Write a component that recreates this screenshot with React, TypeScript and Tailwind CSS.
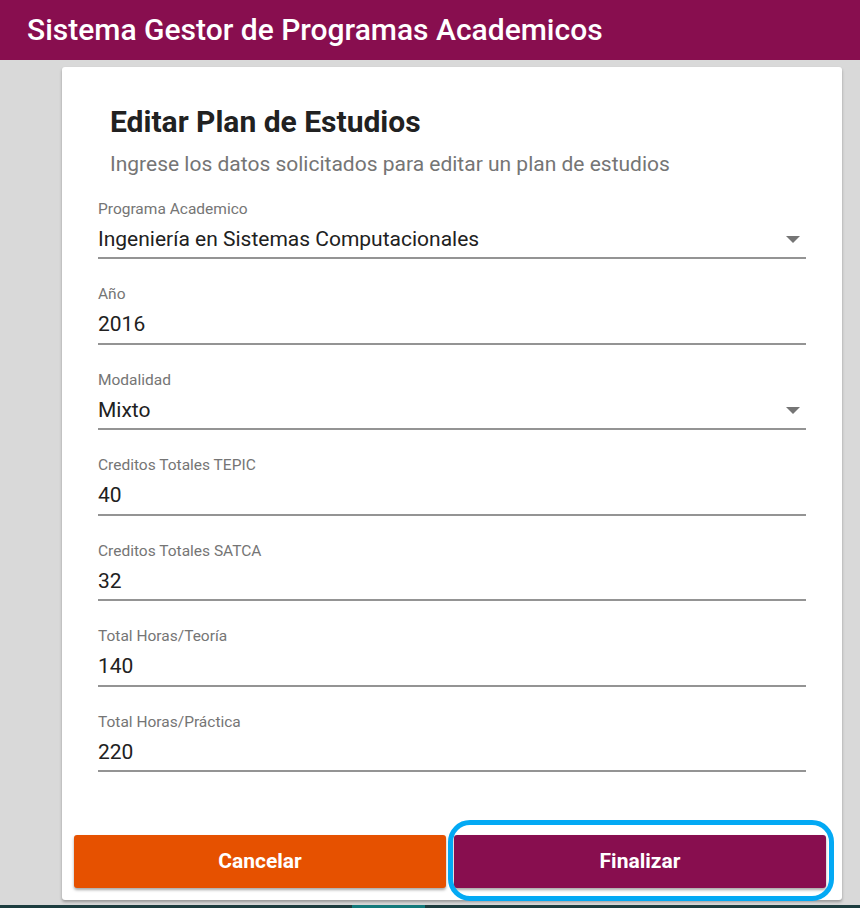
import React from "react";

type Field = { label: string; value: string; select?: boolean };

const fields: Field[] = [
  { label: "Programa Academico", value: "Ingeniería en Sistemas Computacionales", select: true },
  { label: "Año", value: "2016" },
  { label: "Modalidad", value: "Mixto", select: true },
  { label: "Creditos Totales TEPIC", value: "40" },
  { label: "Creditos Totales SATCA", value: "32" },
  { label: "Total Horas/Teoría", value: "140" },
  { label: "Total Horas/Práctica", value: "220" },
];

export default function App() {
  return (
    <div
      className="w-[860px] h-[908px] bg-[#d9d9d9] flex flex-col overflow-hidden"
      style={{ fontFamily: "Roboto, 'Liberation Sans', sans-serif" }}
    >
      <header className="h-[60px] shrink-0 bg-[#880e4f] flex items-center pl-[27px]">
        <h1 className="text-white text-[30px] font-medium leading-none">
          Sistema Gestor de Programas Academicos
        </h1>
      </header>
      <div className="flex-1 pl-[62px] pr-[18px] pt-[7px]">
        <div className="bg-white rounded-[3px] shadow-[0_2px_3px_rgba(0,0,0,0.3)] h-[833px] flex flex-col">
          <div className="pl-[48px] pt-[38px]">
            <h2 className="text-[30px] font-bold leading-[34px] text-[#212121]">Editar Plan de Estudios</h2>
            <p className="mt-[12px] text-[21px] leading-[26px] text-[#757575]">
              Ingrese los datos solicitados para editar un plan de estudios
            </p>
          </div>
          <div className="mt-[22.5px] pl-[36px] pr-[36px] flex flex-col gap-[26px]">
            {fields.map((f) => (
              <div key={f.label} className="flex flex-col border-b-2 border-[#949494]">
                <label className="text-[15.5px] leading-[19px] text-[#757575]">{f.label}</label>
                <div className="mt-[8px] mb-[5.5px] h-[25px] flex items-center justify-between">
                  <span className="text-[21px] leading-[25px] text-[#212121]">{f.value}</span>
                  {f.select && (
                    <svg width="14" height="7" viewBox="0 0 14 7" className="mr-[6px]">
                      <path d="M0 0 L14 0 L7 7 Z" fill="#757575" />
                    </svg>
                  )}
                </div>
              </div>
            ))}
          </div>
          <div className="mt-auto mb-[12px] ml-[12px] mr-[16px] flex gap-[8px]">
            <button className="flex-1 h-[53px] rounded-[3px] bg-[#e65100] text-white text-[21px] font-bold shadow-[0_2px_3px_rgba(0,0,0,0.35)]">
              Cancelar
            </button>
            <div className="flex-1 relative">
              <button className="w-full h-[53px] rounded-[3px] bg-[#880e4f] text-white text-[21px] font-bold shadow-[0_2px_3px_rgba(0,0,0,0.35)]">
                Finalizar
              </button>
              <div className="absolute left-[-6px] right-[-8px] top-[-15px] bottom-[-13px] border-[5px] border-[#03a9f4] rounded-[22px] pointer-events-none" />
            </div>
          </div>
        </div>
      </div>
      <div className="h-[3px] shrink-0 bg-[#1d3d3f] flex">
        <div className="ml-[352px] w-[73px] bg-[#12797a]" />
      </div>
    </div>
  );
}
